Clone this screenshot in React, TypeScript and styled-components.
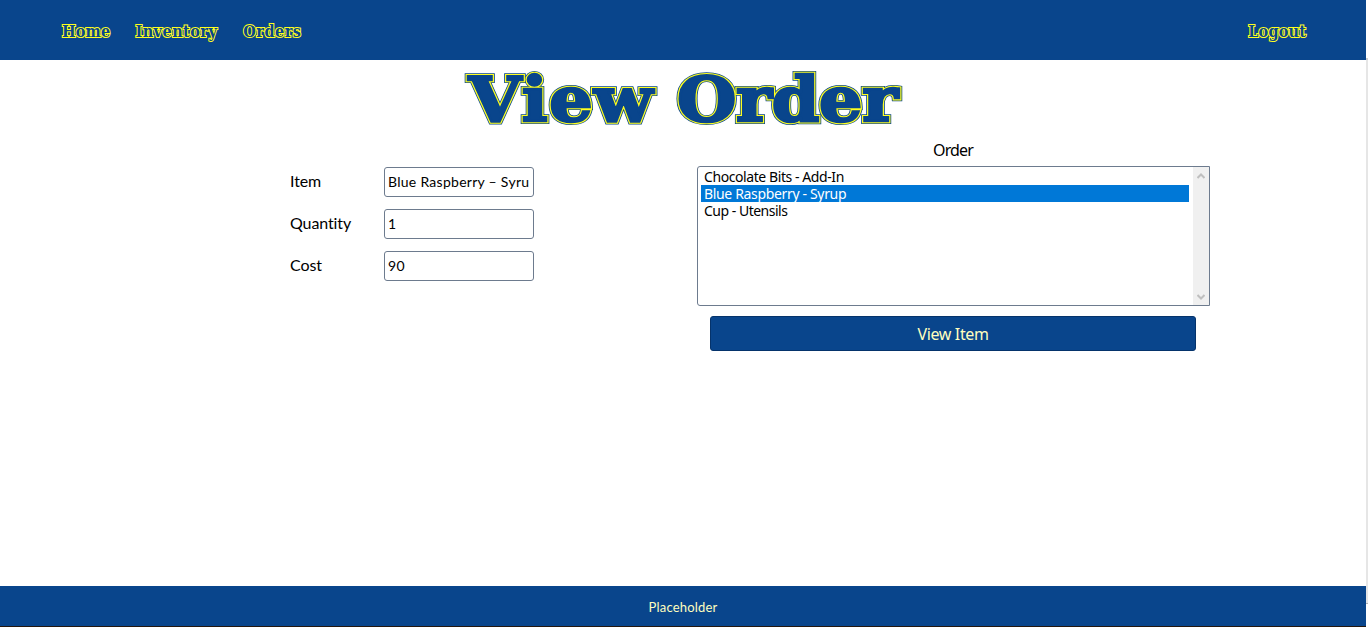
import React from "react";
import styled, { createGlobalStyle } from "styled-components";

const blue = "#09458c";
const yellow = "#ffff1f";

const GlobalStyle = createGlobalStyle`
  * { box-sizing: border-box; }
  body { margin: 0; background: #fff; color: #000; font: 16px/20px "Noto Sans", sans-serif; overflow: hidden; }
`;

const Shell = styled.div`
  display: grid;
  grid-template-columns: 1366px 2px;
  height: 627px;
`;

const Page = styled.div`
  display: flex;
  flex-direction: column;
`;

const Gutter = styled.div`
  margin-top: 58px;
  height: 568px;
  background: linear-gradient(#cdcdcd 0 2px, #e6e6e6 2px 545px, #b0b0b0 545px 546px, #fff 546px);
`;

const NavBar = styled.nav`
  display: flex;
  align-items: center;
  height: 60px;
  padding: 4px 60px 0 62px;
  background: ${blue};
`;

const NavLink = styled.a<{ $gap?: string; $track?: string }>`
  margin-left: ${(p) => p.$gap ?? "0"};
  font: bold 16px/20px "DejaVu Serif Condensed", "DejaVu Serif", serif;
  font-stretch: condensed;
  letter-spacing: ${(p) => p.$track ?? "0"};
  color: ${blue};
  -webkit-text-stroke: 2px ${yellow};
  paint-order: stroke fill;
`;

const Title = styled.h1`
  isolation: isolate;
  width: max-content;
  height: 64px;
  margin: 7px auto 0;
  font: bold 62px/66px "DejaVu Serif", serif;
  word-spacing: -1px;
  color: ${blue};
  transform: scaleX(1.1);
`;

/* Each word is drawn three times: blue face, yellow outline, thin blue edge. */
const Word = styled.span<{ $track: string }>`
  position: relative;
  display: inline-block;
  letter-spacing: ${(p) => p.$track};
  -webkit-text-stroke: 2.5px ${blue};

  &::before,
  &::after {
    content: attr(data-word);
    position: absolute;
    top: 0;
    left: 0;
  }
  &::before {
    z-index: -1;
    -webkit-text-stroke: 4.7px ${yellow};
  }
  &::after {
    z-index: -2;
    -webkit-text-stroke: 6.2px ${blue};
  }
`;

const Content = styled.main`
  display: flex;
  flex: 1;
  padding: 9px 0 0 290px;
`;

const Form = styled.form`
  display: flex;
  flex-direction: column;
  gap: 12px;
  width: 407px;
  padding-top: 27px;
`;

const Field = styled.label`
  display: grid;
  grid-template-columns: 94px 150px;
  height: 30px;
  font-family: Lato, sans-serif;
  line-height: 28px;
  letter-spacing: -0.1px;
`;

const Input = styled.input`
  width: 150px;
  height: 30px;
  padding: 0 3px 2px;
  border: 1px solid #6d7b8e;
  border-radius: 3px;
  font: 14px/20px Lato, sans-serif;
  letter-spacing: 0.28px;
  color: #000;
  background: #fff;
`;

const OrderPanel = styled.section`
  display: flex;
  flex-direction: column;
  align-items: center;
  width: 513px;
`;

const Caption = styled.div`
  height: 26px;
  padding-right: 1px;
  line-height: 20px;
  letter-spacing: -0.9px;
`;

const ListBox = styled.div`
  display: flex;
  width: 513px;
  height: 140px;
  border: 1px solid #6d7b8e;
  border-radius: 3px 0 0 3px;
`;

const Options = styled.div`
  flex: 1;
  padding: 1px 4px 0 3px;
`;

const Option = styled.div<{ $selected?: boolean; $track: string }>`
  height: 17px;
  padding-left: 3px;
  font-size: 14px;
  line-height: 17px;
  letter-spacing: ${(p) => p.$track};
  color: ${(p) => (p.$selected ? "#fff" : "#000")};
  background: ${(p) => (p.$selected ? "#0078d7" : "transparent")};
`;

const Scrollbar = styled.div`
  display: flex;
  flex-direction: column;
  justify-content: space-between;
  align-items: center;
  width: 16px;
  padding: 6px 0 5px;
  background: #f0f0f0;
`;

const Chevron = ({ down = false }: { down?: boolean }) => (
  <svg width="8" height="6" viewBox="0 0 8 6" fill="none" stroke="#bfbfbf" strokeWidth="2">
    <path d={down ? "M.5 1 4 4.5 7.5 1" : "M.5 5 4 1.5 7.5 5"} />
  </svg>
);

const ViewButton = styled.button`
  width: 486px;
  height: 35px;
  margin: 10px 1px 0 0;
  padding: 0;
  border: 1px solid #05336b;
  border-radius: 3px;
  font: 16px/20px "Noto Sans", sans-serif;
  letter-spacing: -0.35px;
  color: #ffffbf;
  background: ${blue};
`;

const Footer = styled.footer`
  display: flex;
  justify-content: center;
  align-items: center;
  height: 41px;
  padding-top: 2px;
  border-bottom: 1px solid #24170f;
  font: 13px/20px Lato, sans-serif;
  letter-spacing: 0.2px;
  color: #ffffbf;
  background: ${blue};
`;

export default function App() {
  return (
    <>
      <GlobalStyle />
      <Shell>
        <Page>
          <NavBar>
            <NavLink $track="0.2px">Home</NavLink>
            <NavLink $gap="25px" $track="0.5px">Inventory</NavLink>
            <NavLink $gap="26px" $track="0.5px">Orders</NavLink>
            <NavLink $gap="auto" $track="0.2px">Logout</NavLink>
          </NavBar>
          <Title>
            <Word data-word="View" $track="1.4px">View</Word>{" "}
            <Word data-word="Order" $track="-0.3px">Order</Word>
          </Title>
          <Content>
            <Form>
              <Field>Item<Input defaultValue="Blue Raspberry – Syru" /></Field>
              <Field>Quantity<Input defaultValue="1" /></Field>
              <Field>Cost<Input defaultValue="90" /></Field>
            </Form>
            <OrderPanel>
              <Caption>Order</Caption>
              <ListBox>
                <Options>
                  <Option $track="-0.42px">Chocolate Bits - Add-In</Option>
                  <Option $track="-0.34px" $selected>Blue Raspberry - Syrup</Option>
                  <Option $track="-0.5px">Cup - Utensils</Option>
                </Options>
                <Scrollbar>
                  <Chevron />
                  <Chevron down />
                </Scrollbar>
              </ListBox>
              <ViewButton>View Item</ViewButton>
            </OrderPanel>
          </Content>
          <Footer>Placeholder</Footer>
        </Page>
        <Gutter />
      </Shell>
    </>
  );
}
